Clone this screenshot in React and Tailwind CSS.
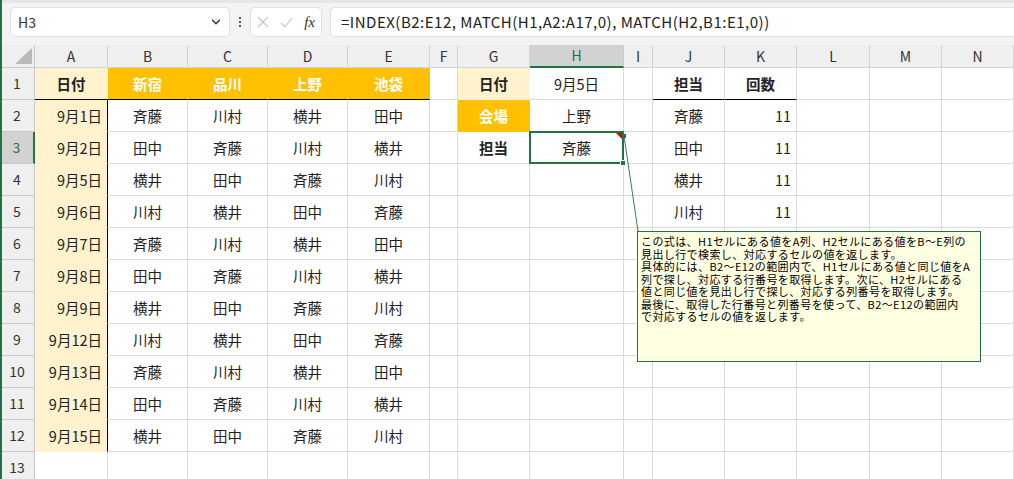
import { ChevronDown } from 'lucide-react';

const JP = { fontFamily: '"Noto Sans CJK JP", "Noto Sans", sans-serif' };

const letters = ['A', 'B', 'C', 'D', 'E', 'F', 'G', 'H', 'I', 'J', 'K', 'L', 'M', 'N'];

const dates = ['9月1日', '9月2日', '9月5日', '9月6日', '9月7日', '9月8日', '9月9日', '9月12日', '9月13日', '9月14日', '9月15日'];
const people = [
  ['斉藤', '川村', '横井', '田中'],
  ['田中', '斉藤', '川村', '横井'],
  ['横井', '田中', '斉藤', '川村'],
  ['川村', '横井', '田中', '斉藤'],
  ['斉藤', '川村', '横井', '田中'],
  ['田中', '斉藤', '川村', '横井'],
  ['横井', '田中', '斉藤', '川村'],
  ['川村', '横井', '田中', '斉藤'],
  ['斉藤', '川村', '横井', '田中'],
  ['田中', '斉藤', '川村', '横井'],
  ['横井', '田中', '斉藤', '川村'],
];

const base = 'h-[32px] flex items-center px-[5px] text-[14.5px] text-[#222] border-r border-b';
const plain = base + ' border-[#dadada]';

// cell content + style for a given row (1-based) and column (0-based, A = 0)
function cellFor(r, c) {
  if (r === 1) {
    if (c === 0) return { t: '日付', cls: base + ' justify-center font-bold bg-[#fff2cc] border-r-[#fff2cc] border-b-black' };
    if (c >= 1 && c <= 4) {
      const t = ['新宿', '品川', '上野', '池袋'][c - 1];
      return { t, cls: base + ' justify-center font-bold text-white bg-[#ffc000] border-r-[#ffc000] border-b-black' };
    }
    if (c === 6) return { t: '日付', cls: base + ' justify-center font-bold bg-[#fff2cc] border-[#fff2cc]' };
    if (c === 7) return { t: '9月5日', cls: plain + ' justify-center' };
    if (c === 9) return { t: '担当', cls: base + ' justify-center font-bold border-r-[#dadada] border-b-black' };
    if (c === 10) return { t: '回数', cls: base + ' justify-center font-bold border-r-[#dadada] border-b-black' };
    return { t: '', cls: plain };
  }
  if (r >= 2 && r <= 12) {
    if (c === 0) return { t: dates[r - 2], cls: base + ' justify-end bg-[#fff2cc] border-r-black border-b-[#fff2cc]' };
    if (c >= 1 && c <= 4) return { t: people[r - 2][c - 1], cls: plain + ' justify-center' };
  }
  if (r === 2 && c === 6) return { t: '会場', cls: base + ' justify-center font-bold text-white bg-[#ffc000] border-[#ffc000]' };
  if (r === 2 && c === 7) return { t: '上野', cls: plain + ' justify-center' };
  if (r === 3 && c === 6) return { t: '担当', cls: plain + ' justify-center font-bold' };
  if (r === 3 && c === 7) return { t: '斉藤', cls: plain + ' justify-center relative', sel: true };
  if (r >= 2 && r <= 5 && c === 9) return { t: ['斉藤', '田中', '横井', '川村'][r - 2], cls: plain + ' justify-center' };
  if (r >= 2 && r <= 5 && c === 10) return { t: '11', cls: plain + ' justify-end' };
  return { t: '', cls: plain };
}

const note = [
  'この式は、H1セルにある値をA列、H2セルにある値をB～E列の',
  '見出し行で検索し、対応するセルの値を返します。',
  '具体的には、B2～E12の範囲内で、H1セルにある値と同じ値をA',
  '列で探し、対応する行番号を取得します。次に、H2セルにある',
  '値と同じ値を見出し行で探し、対応する列番号を取得します。',
  '最後に、取得した行番号と列番号を使って、B2～E12の範囲内',
  'で対応するセルの値を返します。',
];

export default function App() {
  const rows = Array.from({ length: 13 }, (_, i) => i + 1);

  return (
    <div className="relative w-[1014px] h-[479px] overflow-hidden bg-white" style={JP}>
      {/* formula bar */}
      <div className="h-[45px] bg-[#f3f3f3] border-t-[3px] border-[#e6e6e6] flex items-start pt-[4px] pl-[10px] gap-[8px]">
        <div className="w-[220px] h-[30px] bg-white border border-[#e1e1e1] rounded-[5px] flex items-center justify-between pl-[7px] pr-[6px]">
          <span className="text-[14px] text-[#333]">H3</span>
          <ChevronDown size={14} strokeWidth={2.5} className="text-[#333]" />
        </div>
        <div className="h-[30px] flex flex-col justify-center gap-[2px] px-[1px]">
          <span className="w-[2px] h-[2px] bg-[#555]" />
          <span className="w-[2px] h-[2px] bg-[#555]" />
          <span className="w-[2px] h-[2px] bg-[#555]" />
        </div>
        <div className="w-[72px] h-[30px] bg-white border border-[#e1e1e1] rounded-[5px] flex items-center justify-between px-[6px]">
          <svg width="12" height="12" viewBox="0 0 12 12"><path d="M1 1 L11 11 M11 1 L1 11" stroke="#c4c4c4" strokeWidth="1.1" fill="none" /></svg>
          <svg width="13" height="11" viewBox="0 0 13 11"><path d="M1 6 L5 10 L12 1" stroke="#c4c4c4" strokeWidth="1.1" fill="none" /></svg>
          <span className="text-[15px] italic text-[#333] leading-none" style={{ fontFamily: '"Liberation Serif", serif' }}>fx</span>
        </div>
        <div className="flex-1 h-[30px] bg-white border border-[#e1e1e1] border-r-0 rounded-l-[5px] flex items-center pl-[10px]">
          <span className="text-[15px] tracking-[0.5px] text-[#222] whitespace-nowrap">=INDEX(B2:E12, MATCH(H1,A2:A17,0), MATCH(H2,B1:E1,0))</span>
        </div>
      </div>

      {/* sheet */}
      <div className="grid grid-cols-[35px_73px_80px_80px_80px_82px_28px_72px_94px_29px_72px_72px_73px_72px_72px]">
        <div className="h-[23px] bg-[#efefef] border-r border-b border-[#c8c8c8] flex items-end justify-end pr-[2px] pb-[3px]">
          <svg width="17" height="16" viewBox="0 0 17 16"><path d="M17 0 L17 16 L0 16 Z" fill="#b9b9b9" /></svg>
        </div>
        {letters.map((l) => (
          <div
            key={l}
            className={
              l === 'H'
                ? 'h-[23px] bg-[#d2d2d2] border-r border-[#c8c8c8] border-b-2 border-b-[#217346] flex items-center justify-center text-[14px] text-[#217346]'
                : 'h-[23px] bg-[#efefef] border-r border-b border-[#d4d4d4] flex items-center justify-center text-[14px] text-[#333]'
            }
          >
            {l}
          </div>
        ))}

        {rows.map((r) => (
          <div key={r} className="contents">
            <div
              className={
                r === 3
                  ? 'h-[32px] bg-[#d2d2d2] border-r-2 border-r-[#217346] border-b border-b-[#c8c8c8] flex items-center justify-center text-[14px] text-[#217346]'
                  : 'h-[32px] bg-[#efefef] border-r border-b border-[#c8c8c8] flex items-center justify-center text-[14px] text-[#333]'
              }
            >
              {r}
            </div>
            {letters.map((_, c) => {
              const cell = cellFor(r, c);
              return (
                <div key={c} className={cell.cls}>
                  {cell.t}
                  {cell.sel && (
                    <>
                      <div className="absolute left-[-1px] top-[-1px] w-[95px] h-[33px] border-2 border-[#217346]" />
                      <div className="absolute right-[1px] top-[1px] w-0 h-0 border-l-[6px] border-l-transparent border-t-[6px] border-t-[#e00000]" />
                      <div className="absolute right-[-3px] bottom-[-3px] w-[6px] h-[6px] bg-[#217346] border border-white" />
                    </>
                  )}
                </div>
              );
            })}
          </div>
        ))}
      </div>

      {/* comment connector */}
      <svg className="absolute left-0 top-0 pointer-events-none" width="1014" height="479">
        <line x1="624" y1="136" x2="638" y2="231" stroke="#3c7a55" strokeWidth="1" />
        <rect x="622" y="134" width="4" height="4" fill="#217346" />
      </svg>

      {/* comment box */}
      <div className="absolute left-[637px] top-[231px] w-[344px] h-[131px] bg-[#ffffe1] border border-[#217346] pt-[3px] pl-[3px]">
        {note.map((line) => (
          <div key={line} className="text-[11px] leading-[12.5px] tracking-[0.4px] text-black whitespace-nowrap">
            {line}
          </div>
        ))}
      </div>

      <div className="absolute left-0 top-0 bottom-0 w-[2px] bg-[#217346]" />
    </div>
  );
}
